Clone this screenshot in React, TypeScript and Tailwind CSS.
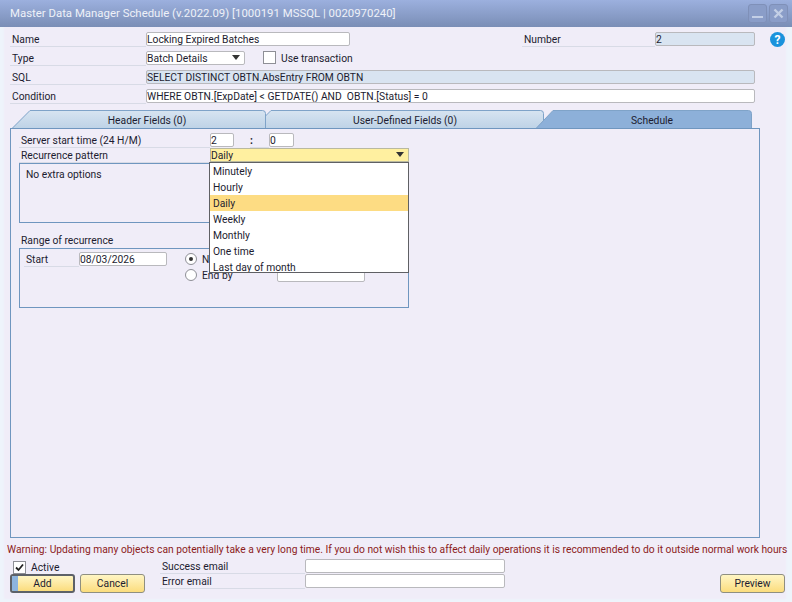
import React from "react";

const Label = ({ w, children, className = "" }: { w: string; children: React.ReactNode; className?: string }) => (
  <div className={`${w} h-[15px] border-b border-[#d8dbe6] leading-[16px] text-[#1c1c30] ${className}`}>{children}</div>
);

const Field = ({ w, children, tone = "white", className = "" }: { w: string; children?: React.ReactNode; tone?: "white" | "blue"; className?: string }) => (
  <div
    className={`${w} h-[14px] shrink-0 overflow-hidden whitespace-nowrap rounded-[2px] border border-[#b9b9bd] pl-0 leading-[14px] text-[#1c1c30] ${
      tone === "blue" ? "bg-[#d9e4f1]" : "bg-white"
    } ${className}`}
  >
    {children}
  </div>
);

const Tab = ({ width, slant, active, children, className }: { width: number; slant: number; active?: boolean; children: React.ReactNode; className: string }) => (
  <div className={`relative flex h-[19px] items-center justify-center ${className}`}>
    <svg className="absolute inset-0" width={width} height={19} viewBox={`0 0 ${width} 19`}>
      <defs>
        <linearGradient id="tabIdle" x1="0" y1="0" x2="0" y2="1">
          <stop offset="0" stopColor="#d7e4f1" />
          <stop offset="1" stopColor="#bdd2e6" />
        </linearGradient>
      </defs>
      <path
        d={`M0.5 19 L${slant} 0.5 L${width - 3.5} 0.5 Q${width - 0.5} 0.5 ${width - 0.5} 3.5 L${width - 0.5} 19 Z`}
        fill={active ? "#8db0d9" : "url(#tabIdle)"}
        stroke="#7fa3c8"
        strokeWidth="1"
      />
    </svg>
    <span className="relative pt-[2px] text-[#1c1c30]">{children}</span>
  </div>
);

const Radio = ({ on }: { on?: boolean }) => (
  <div className="flex h-[12px] w-[12px] shrink-0 items-center justify-center rounded-full border border-[#8e8f96] bg-white">
    {on && <div className="h-[4px] w-[4px] rounded-full bg-[#333]" />}
  </div>
);

const Button = ({ w, children, main }: { w: string; children: React.ReactNode; main?: boolean }) => (
  <div
    className={`relative ${w} flex h-[19px] items-center justify-center overflow-hidden rounded-[3px] border bg-gradient-to-b from-[#fff6c4] to-[#fbdc7c] text-[#1c1c30] ${
      main ? "border-2 border-[#5d6168]" : "border-[#8f8f80]"
    }`}
  >
    {main && <div className="absolute bottom-0 left-0 top-0 w-[6px] bg-[#8db4de]" />}
    <span className="relative">{children}</span>
  </div>
);

const options = ["Minutely", "Hourly", "Daily", "Weekly", "Monthly", "One time", "Last day of month"];

export default function App() {
  return (
    <div
      className="relative h-[602px] w-[792px] overflow-hidden bg-[#f0edf8] text-[10.3px] text-[#1c1c30] shadow-[inset_4px_-3px_2px_0_#eef4fb,inset_-6px_0_2px_0_#eef4fb]"
      style={{ fontFamily: 'Roboto, "Noto Sans", sans-serif' }}
    >
      <div className="flex h-[27px] items-center justify-between bg-gradient-to-b from-[#9cb0de] to-[#7a8eb6] pl-[10px] pr-[4px]">
        <span className="text-[11.4px] text-[#eef1f8]">Master Data Manager Schedule (v.2022.09) [1000191 MSSQL | 0020970240]</span>
        <div className="flex gap-[2px]">
          <div className="flex h-[19px] w-[19px] items-end justify-center rounded-[3px] border border-[#7f90b8] bg-[#8a9dc8] pb-[4px]">
            <div className="h-[2px] w-[11px] bg-[#c3cfe6]" />
          </div>
          <div className="flex h-[19px] w-[19px] items-center justify-center rounded-[3px] border border-[#7f90b8] bg-[#8a9dc8]">
            <svg width="11" height="11" viewBox="0 0 11 11">
              <path d="M1.5 1.5 L9.5 9.5 M9.5 1.5 L1.5 9.5" stroke="#c3cfe6" strokeWidth="2.4" />
            </svg>
          </div>
        </div>
      </div>

      <div className="flex flex-col gap-[5px] pl-[10px] pt-[5px]">
        <div className="flex h-[14px]">
          <Label w="w-[136px]" className="pl-[2px]">Name</Label>
          <Field w="w-[204px]">Locking Expired Batches</Field>
          <Label w="w-[133px]" className="ml-[172px] pl-[2px]">Number</Label>
          <Field w="w-[100px]" tone="blue">2</Field>
          <div className="ml-[15px] flex h-[15px] w-[15px] items-center justify-center rounded-full bg-[#1a93dc] text-[12px] font-bold text-white">?</div>
        </div>
        <div className="flex h-[14px]">
          <Label w="w-[136px]" className="pl-[2px]">Type</Label>
          <Field w="w-[99px]" className="relative">
            Batch Details
            <div className="absolute right-[4px] top-[3px] h-0 w-0 border-x-[4px] border-t-[5px] border-x-transparent border-t-[#333]" />
          </Field>
          <div className="ml-[18px] h-[13px] w-[13px] shrink-0 border border-[#8e8f96] bg-white" />
          <span className="ml-[5px] leading-[16px]">Use transaction</span>
        </div>
        <div className="flex h-[14px]">
          <Label w="w-[136px]" className="pl-[2px]">SQL</Label>
          <Field w="w-[609px]" tone="blue">SELECT DISTINCT OBTN.AbsEntry FROM OBTN</Field>
        </div>
        <div className="flex h-[14px]">
          <Label w="w-[136px]" className="pl-[2px]">Condition</Label>
          <Field w="w-[609px]" className="whitespace-pre">WHERE OBTN.[ExpDate] &lt; GETDATE() AND  OBTN.[Status] = 0</Field>
        </div>
      </div>

      <div className="mt-[7px] flex pl-[11px]">
        <Tab width={255} slant={19} className="z-10 w-[255px] pl-[17px]">Header Fields (0)</Tab>
        <Tab width={292} slant={19} className="-ml-[14px] w-[292px] pl-[14px]">User-Defined Fields (0)</Tab>
        <Tab width={217} slant={18} className="z-10 -ml-[9px] w-[217px] pl-[17px]" active>Schedule</Tab>
      </div>

      <div className="relative z-20 -mt-[1px] ml-[10px] h-[410px] w-[750px] border border-[#6f96bf] pl-[8px] pt-[4px]">
        <div className="flex h-[15px]">
          <Label w="w-[191px]" className="pl-[2px]">Server start time (24 H/M)</Label>
          <Field w="w-[24px]">2</Field>
          <div className="ml-[16px] w-[19px] border-b border-[#d8dbe6] font-bold leading-[16px]">:</div>
          <Field w="w-[25px]">0</Field>
        </div>
        <div className="flex h-[15px]">
          <Label w="w-[191px]" className="pl-[2px]">Recurrence pattern</Label>
          <div className="relative h-[14px] w-[199px] border border-[#b9b9a0] bg-[#fff0a0] pl-0 leading-[14px]">
            Daily
            <div className="absolute right-[4px] top-[3px] h-0 w-0 border-x-[4px] border-t-[5px] border-x-transparent border-t-[#333]" />
          </div>
        </div>
        <div className="h-[60px] w-[390px] border border-[#6f96bf] pl-[6px] pt-[3px] leading-[16px]">No extra options</div>
        <div className="mt-[10px] h-[15px] pl-[2px] leading-[15px]">Range of recurrence</div>
        <div className="h-[60px] w-[390px] border border-[#6f96bf] pl-[4px] pt-[3px]">
          <div className="flex h-[16px]">
            <Label w="w-[55px]" className="pl-[2px]">Start</Label>
            <Field w="w-[88px]">08/03/2026</Field>
            <div className="ml-[18px] flex items-start gap-[5px] pt-[1px]">
              <Radio on />
              <span className="leading-[13px]">No end date</span>
            </div>
          </div>
          <div className="flex h-[15px]">
            <div className="ml-[161px] flex items-start gap-[5px] pt-[1px]">
              <Radio />
              <span className="w-[75px] leading-[13px]">End by</span>
            </div>
            <Field w="w-[88px]" />
          </div>
        </div>

        <div className="absolute left-[198px] top-[33px] h-[111px] w-[200px] overflow-hidden border border-[#5f6064] bg-white">
          {options.map((o) => (
            <div key={o} className={`h-[16px] pl-[3px] leading-[17px] ${o === "Daily" ? "bg-[#fddc83]" : ""}`}>{o}</div>
          ))}
        </div>
      </div>

      <div className="mt-[4px] whitespace-nowrap pl-[7px] text-[10.27px] leading-[15px] text-[#8c1c1c]">
        Warning: Updating many objects can potentially take a very long time. If you do not wish this to affect daily operations it is recommended to do it outside normal work hours
      </div>

      <div className="mt-[4px] flex pl-[10px]">
        <div className="flex w-[150px] flex-col">
          <div className="flex h-[13px] items-center pl-[3px]">
            <div className="flex h-[13px] w-[13px] items-center justify-center border border-[#8e8f96] bg-white">
              <svg width="9" height="9" viewBox="0 0 9 9">
                <path d="M1 4.5 L3.5 7 L8 1.5" fill="none" stroke="#222" strokeWidth="1.8" />
              </svg>
            </div>
            <span className="ml-[5px]">Active</span>
          </div>
          <div className="flex gap-[5px]">
            <Button w="w-[65px]" main>Add</Button>
            <Button w="w-[65px]">Cancel</Button>
          </div>
        </div>
        <div className="-mt-[2px] flex flex-col gap-[1px]">
          <div className="flex h-[14px]">
            <Label w="w-[145px]" className="pl-[2px]">Success email</Label>
            <Field w="w-[200px]" />
          </div>
          <div className="flex h-[14px]">
            <Label w="w-[145px]" className="pl-[2px]">Error email</Label>
            <Field w="w-[200px]" />
          </div>
        </div>
        <div className="ml-[215px] mt-[13px]">
          <Button w="w-[65px]">Preview</Button>
        </div>
      </div>
    </div>
  );
}
